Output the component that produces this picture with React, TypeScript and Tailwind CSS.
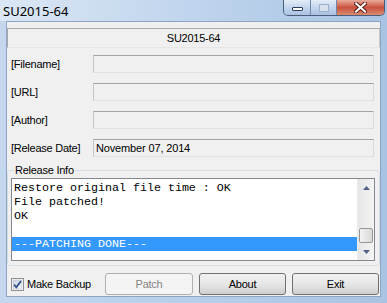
import React from 'react';

const sans = "font-['Liberation_Sans',Arial,sans-serif]";
const small = `${sans} text-[11px] tracking-[-0.25px] text-black`;

const FIELDS = [
  { label: '[Filename]', value: '' },
  { label: '[URL]', value: '' },
  { label: '[Author]', value: '' },
  { label: '[Release Date]', value: 'November 07, 2014' },
];

const LOG = ['Restore original file time : OK', 'File patched!', 'OK', '', '---PATCHING DONE---'];

function CaptionButtons() {
  return (
    <div className="ml-auto mr-[2px] flex h-[16px] overflow-hidden rounded-b-[5px] border-x border-b border-[#4b5d78]">
      <div className="flex w-[27px] items-center justify-center border-r border-[#6f86a6] bg-gradient-to-b from-[#e4edf7] via-[#c4d6ec] to-[#a9c2e2]">
        <div className="mt-[3px] h-[4px] w-[11px] rounded-[1px] border border-[#2d3d57] bg-white" />
      </div>
      <div className="flex w-[26px] items-center justify-center border-r border-[#6f86a6] bg-gradient-to-b from-[#e4edf7] via-[#c4d6ec] to-[#a9c2e2]">
        <div className="h-[8px] w-[10px] border border-[#9fb1c8] bg-[#d6e1ee]" />
      </div>
      <div className="flex w-[47px] items-center justify-center bg-gradient-to-b from-[#e8ab9c] via-[#c9513e] to-[#d98a70]">
        <svg width="13" height="11" viewBox="0 0 13 11">
          <path d="M2 1.5 L11 9.5 M11 1.5 L2 9.5" stroke="#5a1f17" strokeWidth="4" strokeLinecap="square" />
          <path d="M2 1.5 L11 9.5 M11 1.5 L2 9.5" stroke="#ffffff" strokeWidth="2" strokeLinecap="square" />
        </svg>
      </div>
    </div>
  );
}

function CheckBox() {
  return (
    <svg width="13" height="13" viewBox="0 0 13 13">
      <defs>
        <linearGradient id="cb" x1="0" y1="0" x2="1" y2="1">
          <stop offset="0" stopColor="#cbd3e0" />
          <stop offset="1" stopColor="#f6f8fb" />
        </linearGradient>
      </defs>
      <rect x="0.5" y="0.5" width="12" height="12" fill="#fff" stroke="#8e8f8f" />
      <rect x="2" y="2" width="9" height="9" fill="url(#cb)" stroke="#b4bccb" strokeWidth="0.6" />
      <path d="M3 6.5 L5.3 9.3 L10 3" fill="none" stroke="#324f8f" strokeWidth="1.8" />
    </svg>
  );
}

function ScrollBar() {
  return (
    <div className="flex w-[17px] flex-col bg-gradient-to-r from-[#e6e6e6] to-[#f4f4f4] border-l border-[#ececec]">
      <div className="flex h-[17px] items-center justify-center">
        <svg width="7" height="4" viewBox="0 0 7 4">
          <path d="M0 4 L3.5 0 L7 4 Z" fill="#4d6185" />
        </svg>
      </div>
      <div className="flex-1" />
      <div className="mx-[1px] h-[15px] rounded-[2px] border border-[#979797] bg-gradient-to-r from-[#f3f3f3] to-[#d9d9d9]" />
      <div className="flex h-[17px] items-center justify-center">
        <svg width="7" height="4" viewBox="0 0 7 4">
          <path d="M0 0 L7 0 L3.5 4 Z" fill="#4d6185" />
        </svg>
      </div>
    </div>
  );
}

export default function App() {
  return (
    <div className="flex h-[303px] w-[387px] flex-col overflow-hidden bg-gradient-to-r from-[#c4d7ee] via-[#b7cfea] to-[#a9c3e3]">
      {/* title bar */}
      <div className="flex h-[21px] items-start bg-gradient-to-r from-[#dbe7f4] via-[#bfd4ed] to-[#a9c3e3]">
        <span className="mt-[2px] ml-[3px] font-['Noto_Sans',sans-serif] text-[13px] leading-[18px] text-black">SU2015-64</span>
        <CaptionButtons />
      </div>

      {/* client area */}
      <div className="mx-[6px] mb-[6px] flex flex-1 flex-col border border-[#8ea5c2] bg-[#f0f0f0]">
        <div className="mt-[6px] flex h-[20px] items-center justify-center border border-[#a8a8a8] border-r-[#c8c8c8] border-b-[#e6e6e6]">
          <span className={small}>SU2015-64</span>
        </div>

        <div className="mt-[7px] flex flex-col gap-[10px] pl-[4px] pr-[6px]">
          {FIELDS.map((f) => (
            <div key={f.label} className="flex items-center">
              <span className={`${small} w-[82px]`}>{f.label}</span>
              <div className="flex h-[18px] flex-1 items-center border border-[#a3a3a3] border-r-[#dadada] border-b-[#e0e0e0] border-l-[#c6c6c6] bg-[#f0f0f0] pl-[2px]">
                <span className={`${sans} text-[11px] tracking-[-0.15px] text-black`}>{f.value}</span>
              </div>
            </div>
          ))}
        </div>

        {/* release info group */}
        <div className="relative mt-[13px] h-[96px] rounded-[3px] border border-[#d5dfe5] pt-[7px] pl-[3px] pr-[4px] pb-[4px]">
          <span className={`${small} absolute -top-[8px] left-[6px] bg-[#f0f0f0] px-[1px] leading-[14px]`}>Release Info</span>
          <div className="flex h-full border border-[#828790] bg-white">
            <div className="flex-1 pt-[2px]">
              {LOG.map((line, i) => (
                <div
                  key={i}
                  className={`h-[14px] whitespace-pre pl-[2px] font-['Liberation_Mono','Courier_New',monospace] text-[11.67px] leading-[14px] ${
                    i === LOG.length - 1 ? 'bg-[#3399ff] text-white' : 'text-black'
                  }`}
                >
                  {line}
                </div>
              ))}
            </div>
            <ScrollBar />
          </div>
        </div>

        {/* bottom row */}
        <div className="mt-[7px] flex items-center pl-[4px] pr-[1px]">
          <CheckBox />
          <span className={`${small} ml-[3px]`}>Make Backup</span>
          <div className="ml-auto flex gap-[6px]">
            <button className={`${sans} h-[22px] w-[88px] rounded-[3px] border border-[#adb2b5] bg-[#f4f4f4] text-[11px] tracking-[-0.25px] text-[#838383]`}>
              Patch
            </button>
            <button className={`${sans} h-[22px] w-[87px] rounded-[3px] border border-[#707070] bg-gradient-to-b from-[#f2f2f2] via-[#e6e6e6] to-[#cfcfcf] text-[11px] tracking-[-0.25px] text-black`}>
              About
            </button>
            <button className={`${sans} h-[22px] w-[87px] rounded-[3px] border border-[#707070] bg-gradient-to-b from-[#f2f2f2] via-[#e6e6e6] to-[#cfcfcf] text-[11px] tracking-[-0.25px] text-black`}>
              Exit
            </button>
          </div>
        </div>
      </div>
    </div>
  );
}
